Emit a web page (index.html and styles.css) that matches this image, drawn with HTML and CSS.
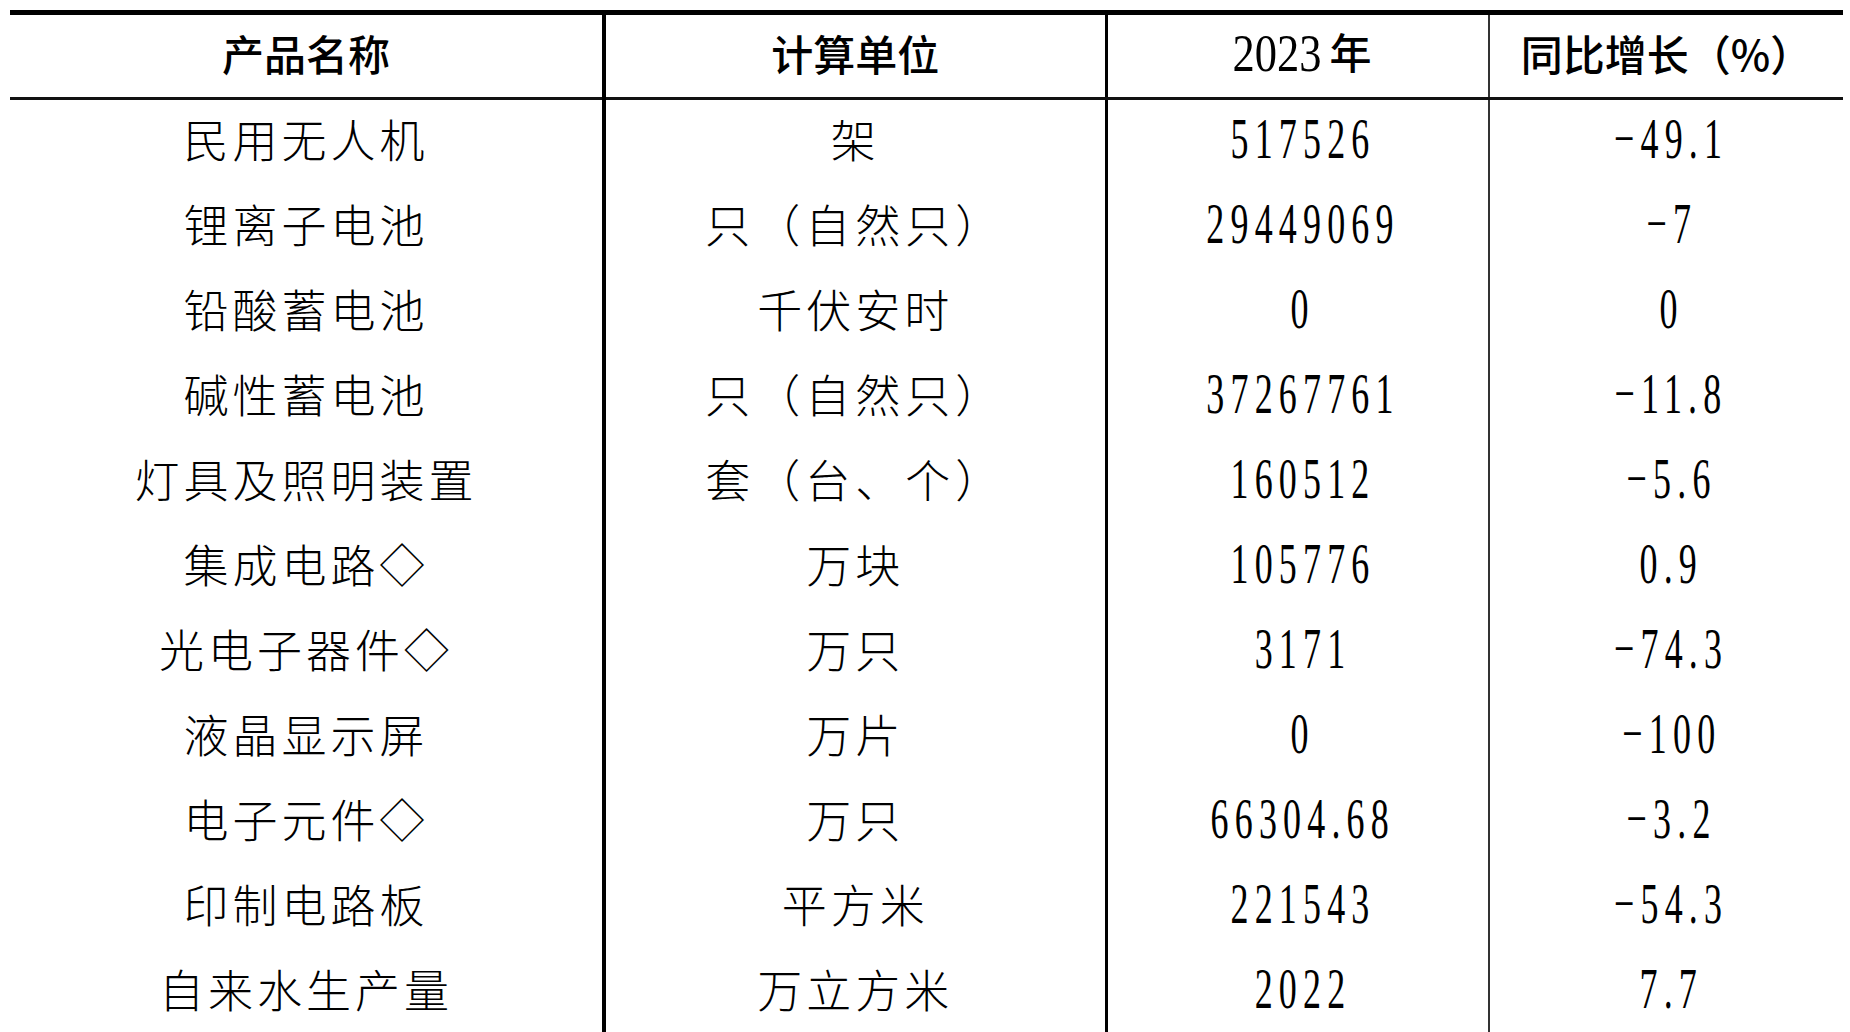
FILE: index.html
```html
<!DOCTYPE html>
<html lang="zh-CN">
<head>
<meta charset="utf-8">
<title>产品产量</title>
<link rel="stylesheet" href="styles.css">
</head>
<body>
<table class="data">
  <colgroup>
    <col class="c1"><col class="c2"><col class="c3"><col class="c4">
  </colgroup>
  <thead>
    <tr>
      <th class="b1">产品名称</th>
      <th class="b2">计算单位</th>
      <th class="b3"><span class="yr">2023</span> 年</th>
      <th>同比增长（%）</th>
    </tr>
  </thead>
  <tbody>
    <tr><td class="b1">民用无人机</td><td class="b2">架</td><td class="b3"><span class="num">517526</span></td><td><span class="num">−49.1</span></td></tr>
    <tr><td class="b1">锂离子电池</td><td class="b2 sp">只（自然只）</td><td class="b3"><span class="num">29449069</span></td><td><span class="num">−7</span></td></tr>
    <tr><td class="b1">铅酸蓄电池</td><td class="b2">千伏安时</td><td class="b3"><span class="num">0</span></td><td><span class="num">0</span></td></tr>
    <tr><td class="b1">碱性蓄电池</td><td class="b2 sp">只（自然只）</td><td class="b3"><span class="num">37267761</span></td><td><span class="num">−11.8</span></td></tr>
    <tr><td class="b1">灯具及照明装置</td><td class="b2 sp">套（台、个）</td><td class="b3"><span class="num">160512</span></td><td><span class="num">−5.6</span></td></tr>
    <tr><td class="b1">集成电路◇</td><td class="b2">万块</td><td class="b3"><span class="num">105776</span></td><td><span class="num">0.9</span></td></tr>
    <tr><td class="b1">光电子器件◇</td><td class="b2">万只</td><td class="b3"><span class="num">3171</span></td><td><span class="num">−74.3</span></td></tr>
    <tr><td class="b1">液晶显示屏</td><td class="b2">万片</td><td class="b3"><span class="num">0</span></td><td><span class="num">−100</span></td></tr>
    <tr><td class="b1">电子元件◇</td><td class="b2">万只</td><td class="b3"><span class="num">66304.68</span></td><td><span class="num">−3.2</span></td></tr>
    <tr><td class="b1">印制电路板</td><td class="b2">平方米</td><td class="b3"><span class="num">221543</span></td><td><span class="num">−54.3</span></td></tr>
    <tr><td class="b1">自来水生产量</td><td class="b2">万立方米</td><td class="b3"><span class="num">2022</span></td><td><span class="num">7.7</span></td></tr>
  </tbody>
</table>
</body>
</html>
```

FILE: styles.css
```css
html, body {
  margin: 0;
  padding: 0;
  background: #ffffff;
}

body {
  padding: 10px 7px 0 10px;
  color: #000;
  font-family: "Noto Sans CJK SC", "Liberation Serif", serif;
}

.data {
  width: 1833px;
  border-collapse: collapse;
  table-layout: fixed;
}

.c1 { width: 594px; }
.c2 { width: 502px; }
.c3 { width: 383px; }
.c4 { width: 354px; }

.data thead th {
  height: 76px;
  padding: 0 0 6px;
  border-top: 5px solid #000;
  border-bottom: 3px solid #111;
  font-size: 42px;
  font-weight: 500;
  text-align: center;
  vertical-align: middle;
  line-height: 1;
}

.data td {
  height: 77px;
  padding: 0 0 8px;
  font-size: 45px;
  font-weight: 300;
  letter-spacing: 4px;
  text-align: center;
  vertical-align: middle;
  line-height: 1;
}

.data .b1 { border-right: 4px solid #000; }
.data .b2 { border-right: 3px solid #000; }
.data .b3 { border-right: 2px solid #333; }

.data td.sp { letter-spacing: 5px; }

.yr {
  font-family: "Liberation Serif", serif;
  font-weight: 400;
  font-size: 53px;
  display: inline-block;
  transform: scaleX(0.84);
  transform-origin: center;
  vertical-align: -2px;
  margin-right: -10px;
}

.num {
  display: inline-block;
  font-family: "Liberation Serif", serif;
  font-size: 58px;
  letter-spacing: 10px;
  transform: scaleX(0.62);
  transform-origin: center;
  margin-right: -10px;
}
```
